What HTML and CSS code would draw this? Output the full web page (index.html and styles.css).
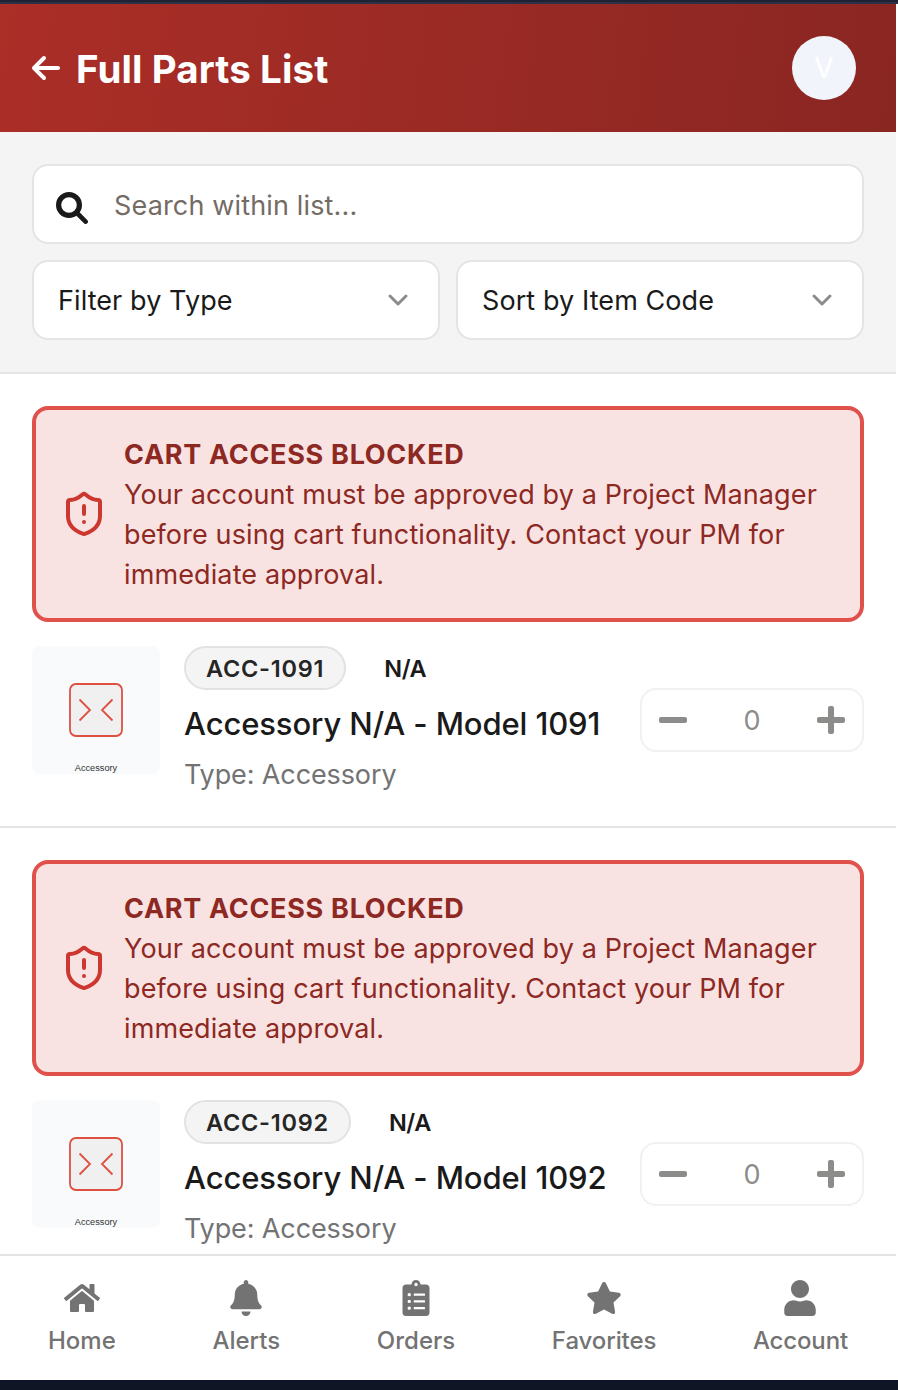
FILE: index.html
```
<!DOCTYPE html>
<html lang="en">
<head>
<meta charset="utf-8">
<title>Full Parts List</title>
<link rel="stylesheet" href="styles.css">
</head>
<body>
<svg class="defs" aria-hidden="true">
  <symbol id="shield" viewBox="0 0 24 24"><g fill="none" stroke="currentColor" stroke-width="2" stroke-linecap="round" stroke-linejoin="round"><path d="M20 13c0 5-3.5 7.5-7.66 8.95a1 1 0 0 1-.67-.01C7.5 20.5 4 18 4 13V6a1 1 0 0 1 1-1c2 0 4.5-1.2 6.24-2.72a1.17 1.17 0 0 1 1.52 0C14.51 3.81 17 5 19 5a1 1 0 0 1 1 1z"/><path d="M12 8v4M12 16h.01"/></g></symbol>
  <symbol id="minus" viewBox="0 0 448 512"><path d="M416 208H32c-17.67 0-32 14.33-32 32v32c0 17.67 14.33 32 32 32h384c17.67 0 32-14.33 32-32v-32c0-17.67-14.33-32-32-32z"/></symbol>
  <symbol id="plus" viewBox="0 0 448 512"><path d="M416 208H272V64c0-17.67-14.33-32-32-32h-32c-17.67 0-32 14.33-32 32v144H32c-17.67 0-32 14.33-32 32v32c0 17.67 14.33 32 32 32h144v144c0 17.67 14.33 32 32 32h32c17.67 0 32-14.33 32-32V304h144c17.67 0 32-14.33 32-32v-32c0-17.67-14.33-32-32-32z"/></symbol>
  <symbol id="chevron" viewBox="0 0 32 32"><path d="M8 12l8 8 8-8" fill="none" stroke="currentColor" stroke-width="3" stroke-linecap="round" stroke-linejoin="round"/></symbol>
  <symbol id="thumb" viewBox="0 0 128 128"><rect x="38" y="38" width="52" height="52" rx="6" fill="#f0f0f0" stroke="#df5040" stroke-width="1.8"/><path d="M47.5 53.5L58 64 47.5 74.5M80.5 53.5L70 64l10.500 10.500" fill="none" stroke="#df5040" stroke-width="1.8"/></symbol>
</svg>
<div class="app">
  <div class="topbar"></div>
  <header class="header">
    <svg class="back" viewBox="0 0 448 512"><path d="M9.400 233.400c-12.500 12.500-12.500 32.800 0 45.300l160 160c12.500 12.500 32.800 12.500 45.300 0s12.500-32.800 0-45.300L109.200 288 416 288c17.700 0 32-14.300 32-32s-14.300-32-32-32l-306.700 0L214.600 118.600c12.500-12.500 12.500-32.800 0-45.300s-32.800-12.500-45.300 0l-160 160z"/></svg>
    <h1 class="title">Full Parts List</h1>
    <div class="avatar">V</div>
  </header>
  <section class="filters">
    <div class="field search">
      <svg class="search-icon" viewBox="0 0 32 32"><g fill="none" stroke="currentColor"><circle cx="13" cy="13" r="10.400" stroke-width="5.200"/><path d="M21 21l8.600 8.600" stroke-width="4.600" stroke-linecap="round"/></g></svg>
      <span class="placeholder">Search within list...</span>
    </div>
    <div class="selects">
      <div class="field select"><span class="select-text">Filter by Type</span><svg class="chev"><use href="#chevron"/></svg></div>
      <div class="field select"><span class="select-text">Sort by Item Code</span><svg class="chev"><use href="#chevron"/></svg></div>
    </div>
  </section>
  <main class="list">
    <article class="part">
      <div class="alert">
        <svg class="shield"><use href="#shield"/></svg>
        <div class="alert-body"><strong class="alert-title">CART ACCESS BLOCKED</strong><p class="alert-text">Your account must be approved by a Project Manager<br>before using cart functionality. Contact your PM for<br>immediate approval.</p></div>
      </div>
      <div class="item">
        <div class="thumb"><svg class="thumb-art"><use href="#thumb"/></svg><span class="thumb-label">Accessory</span></div>
        <div class="info">
          <div class="tags"><span class="code">ACC-1091</span><span class="maker">N/A</span></div>
          <div class="name">Accessory N/A - Model 1091</div>
          <div class="type">Type: Accessory</div>
        </div>
        <div class="stepper"><svg class="step"><use href="#minus"/></svg><span class="qty">0</span><svg class="step"><use href="#plus"/></svg></div>
      </div>
    </article>
    <article class="part">
      <div class="alert">
        <svg class="shield"><use href="#shield"/></svg>
        <div class="alert-body"><strong class="alert-title">CART ACCESS BLOCKED</strong><p class="alert-text">Your account must be approved by a Project Manager<br>before using cart functionality. Contact your PM for<br>immediate approval.</p></div>
      </div>
      <div class="item">
        <div class="thumb"><svg class="thumb-art"><use href="#thumb"/></svg><span class="thumb-label">Accessory</span></div>
        <div class="info">
          <div class="tags"><span class="code">ACC-1092</span><span class="maker">N/A</span></div>
          <div class="name">Accessory N/A - Model 1092</div>
          <div class="type">Type: Accessory</div>
        </div>
        <div class="stepper"><svg class="step"><use href="#minus"/></svg><span class="qty">0</span><svg class="step"><use href="#plus"/></svg></div>
      </div>
    </article>
  </main>
  <nav class="tabs">
    <a class="tab"><svg class="tab-icon" viewBox="0 0 576 512"><path d="M280.370 148.260L96 300.110V464a16 16 0 0 0 16 16l112.060-.29a16 16 0 0 0 15.920-16V368a16 16 0 0 1 16-16h64a16 16 0 0 1 16 16v95.640a16 16 0 0 0 16 16.050L464 480a16 16 0 0 0 16-16V300L295.670 148.260a12.190 12.190 0 0 0-15.300 0zM571.600 251.470L488 182.560V44.050a12 12 0 0 0-12-12h-56a12 12 0 0 0-12 12v72.610L318.470 43a48 48 0 0 0-61 0L4.340 251.470a12 12 0 0 0-1.600 16.900l25.500 31A12 12 0 0 0 45.150 301l235.220-193.740a12.190 12.190 0 0 1 15.300 0L530.900 301a12 12 0 0 0 16.900-1.600l25.500-31a12 12 0 0 0-1.700-16.930z"/></svg><span>Home</span></a>
    <a class="tab alerts"><svg class="tab-icon" viewBox="0 0 448 512"><path d="M224 512c35.320 0 63.970-28.650 63.970-64H160.030c0 35.350 28.650 64 63.970 64zm215.390-149.710c-19.320-20.760-55.470-51.990-55.470-154.290 0-77.700-54.480-139.900-127.940-155.160V32c0-17.670-14.320-32-31.980-32s-31.980 14.330-31.980 32v20.840C118.560 68.100 64.080 130.300 64.080 208c0 102.300-36.150 133.530-55.470 154.290-6 6.450-8.660 14.160-8.610 21.710.11 16.400 12.980 32 32.100 32h383.800c19.120 0 32-15.600 32.100-32 .05-7.550-2.610-15.270-8.610-21.710z"/></svg><span>Alerts</span></a>
    <a class="tab"><svg class="tab-icon" viewBox="0 0 384 512"><path fill-rule="evenodd" d="M336 64h-80c0-35.300-28.700-64-64-64s-64 28.700-64 64H48C21.500 64 0 85.500 0 112v352c0 26.500 21.500 48 48 48h288c26.500 0 48-21.500 48-48V112c0-26.500-21.500-48-48-48zM96 424a24 24 0 1 1 0-48 24 24 0 0 1 0 48zm0-96a24 24 0 1 1 0-48 24 24 0 0 1 0 48zm0-96a24 24 0 1 1 0-48 24 24 0 0 1 0 48zm96-192a24 24 0 1 1 0 48 24 24 0 0 1 0-48zM168 192h144a8 8 0 0 1 8 8v16a8 8 0 0 1-8 8H168a8 8 0 0 1-8-8v-16a8 8 0 0 1 8-8zm0 96h144a8 8 0 0 1 8 8v16a8 8 0 0 1-8 8H168a8 8 0 0 1-8-8v-16a8 8 0 0 1 8-8zm0 96h144a8 8 0 0 1 8 8v16a8 8 0 0 1-8 8H168a8 8 0 0 1-8-8v-16a8 8 0 0 1 8-8z"/></svg><span>Orders</span></a>
    <a class="tab favorites"><svg class="tab-icon" viewBox="0 0 576 512"><path d="M259.300 17.800L194 150.200 47.900 171.500c-26.200 3.800-36.700 36.100-17.700 54.600l105.700 103-25 145.500c-4.500 26.300 23.200 46 46.400 33.700L288 439.600l130.700 68.700c23.200 12.200 50.900-7.400 46.400-33.700l-25-145.500 105.700-103c19-18.500 8.500-50.800-17.700-54.600L382 150.200 316.700 17.800c-11.700-23.600-45.600-23.900-57.400 0z"/></svg><span>Favorites</span></a>
    <a class="tab account"><svg class="tab-icon" viewBox="0 0 448 512"><path d="M224 256c70.700 0 128-57.300 128-128S294.700 0 224 0 96 57.300 96 128s57.300 128 128 128zm89.600 32c-28.700 0-42.500 16-89.600 16s-60.800-16-89.600-16C60.200 288 0 348.200 0 422.400V464c0 26.500 21.500 48 48 48h352c26.500 0 48-21.500 48-48v-41.600c0-74.200-60.200-134.400-134.400-134.400z"/></svg><span>Account</span></a>
  </nav>
</div>
</body>
</html>
```
FILE: styles.css
```
* { box-sizing: border-box; margin: 0; padding: 0; }
body { background: #fff; font-family: Inter, "Liberation Sans", sans-serif; color: #1a1a1a; }
.defs { display: none; }
svg { display: block; flex: none; fill: currentColor; }
.app { width: 898px; height: 1390px; display: flex; flex-direction: column; overflow: hidden; border-bottom: 10px solid #0f1524; }
.topbar { height: 4px; flex: none; background: #1f2233; border-bottom: 2px solid #2c3148; }
.header { width: 896px; height: 128px; flex: none; padding: 0 40px 0 32px; display: flex; align-items: center; background: linear-gradient(98deg, #ab2e27, #8a2622); color: #fff; }
.back { width: 28px; height: 32px; }
.title { flex: 1; margin-left: 16px; padding-top: 2px; font-size: 38.500px; line-height: 56px; font-weight: 700; letter-spacing: 0.1px; white-space: nowrap; }
.avatar { width: 64px; height: 64px; border-radius: 50%; background: #f1f5fb; font-size: 28px; line-height: 64px; text-align: center; }
.filters { width: 896px; height: 242px; flex: none; padding: 32px; display: flex; flex-direction: column; gap: 16px; background: #f4f4f4; border-bottom: 2px solid #e4e4e4; }
.field { height: 80px; border: 2px solid #e4e4e4; border-radius: 16px; background: #fff; display: flex; align-items: center; font-size: 27px; white-space: nowrap; }
.search { padding: 0 22px; }
.search-icon { width: 32px; height: 32px; margin-top: 8px; }
.placeholder { margin-left: 26px; padding-top: 2px; color: #756b65; letter-spacing: 0.15px; }
.selects { display: grid; grid-template-columns: 1fr 1fr; gap: 16px; }
.select { padding: 0 24px; justify-content: space-between; }
.select-text { padding-top: 1px; letter-spacing: 0.08px; }
.chev { width: 32px; height: 32px; color: #8c8c8c; }
.list { flex: 1; min-height: 0; overflow: hidden; width: 896px; }
.part { height: 454px; padding: 32px 32px 0; border-bottom: 2px solid #e4e4e4; }
.alert { height: 216px; padding: 24px; border: 4px solid #e0514c; border-radius: 16px; background: #f8e3e2; display: flex; align-items: center; gap: 16px; color: #8d2823; font-size: 27px; line-height: 40px; white-space: nowrap; }
.alert-body { padding-top: 1px; }
.shield { width: 48px; height: 48px; color: #cc382f; }
.alert-title { display: block; font-weight: 700; letter-spacing: 0.7px; }
.alert-text { letter-spacing: 0.12px; }
.item { display: flex; margin-top: 24px; }
.thumb { position: relative; width: 128px; height: 128px; flex: none; border-radius: 8px; background: #f8fafc; overflow: hidden; }
.thumb-art { width: 128px; height: 128px; }
.thumb-label { position: absolute; left: 0; right: 0; bottom: 0; text-align: center; font: 9.200px/12px "Liberation Sans", Arial, sans-serif; color: #333; }
.info { flex: 1; margin-left: 24px; white-space: nowrap; }
.tags { display: flex; align-items: center; height: 44px; }
.code { height: 44px; padding: 1px 20px 0; border: 2px solid #e2e2e2; border-radius: 22px; background: #f4f4f4; font-size: 23.500px; line-height: 40px; font-weight: 600; letter-spacing: 0.77px; color: #262626; }
.maker { margin-left: 38px; padding-top: 1px; font-size: 23.500px; font-weight: 600; letter-spacing: -0.5px; }
.name { margin-top: 12px; font-size: 31px; line-height: 44px; font-weight: 500; letter-spacing: -0.11px; }
.type { margin-top: 9px; font-size: 27px; line-height: 40px; color: #737373; letter-spacing: -0.12px; }
.stepper { width: 224px; height: 64px; margin-top: 42px; padding: 0 17px; border: 2px solid #f1f1f1; border-radius: 16px; display: flex; align-items: center; justify-content: space-between; color: #8c8c8a; }
.step { width: 28px; height: 32px; }
.qty { padding-top: 2px; font-size: 27px; line-height: 40px; }
.tabs { width: 896px; height: 126px; flex: none; padding: 24px 32px 0; border-top: 2px solid #e4e4e4; background: #fff; display: flex; justify-content: space-between; color: #737373; }
.tab { display: flex; flex-direction: column; align-items: center; gap: 9px; padding: 0 16px; font-size: 24px; line-height: 32px; font-weight: 500; }
.favorites { letter-spacing: -0.1px; }
.account { letter-spacing: -0.15px; }
.tab-icon { width: 36px; height: 36px; }
```
